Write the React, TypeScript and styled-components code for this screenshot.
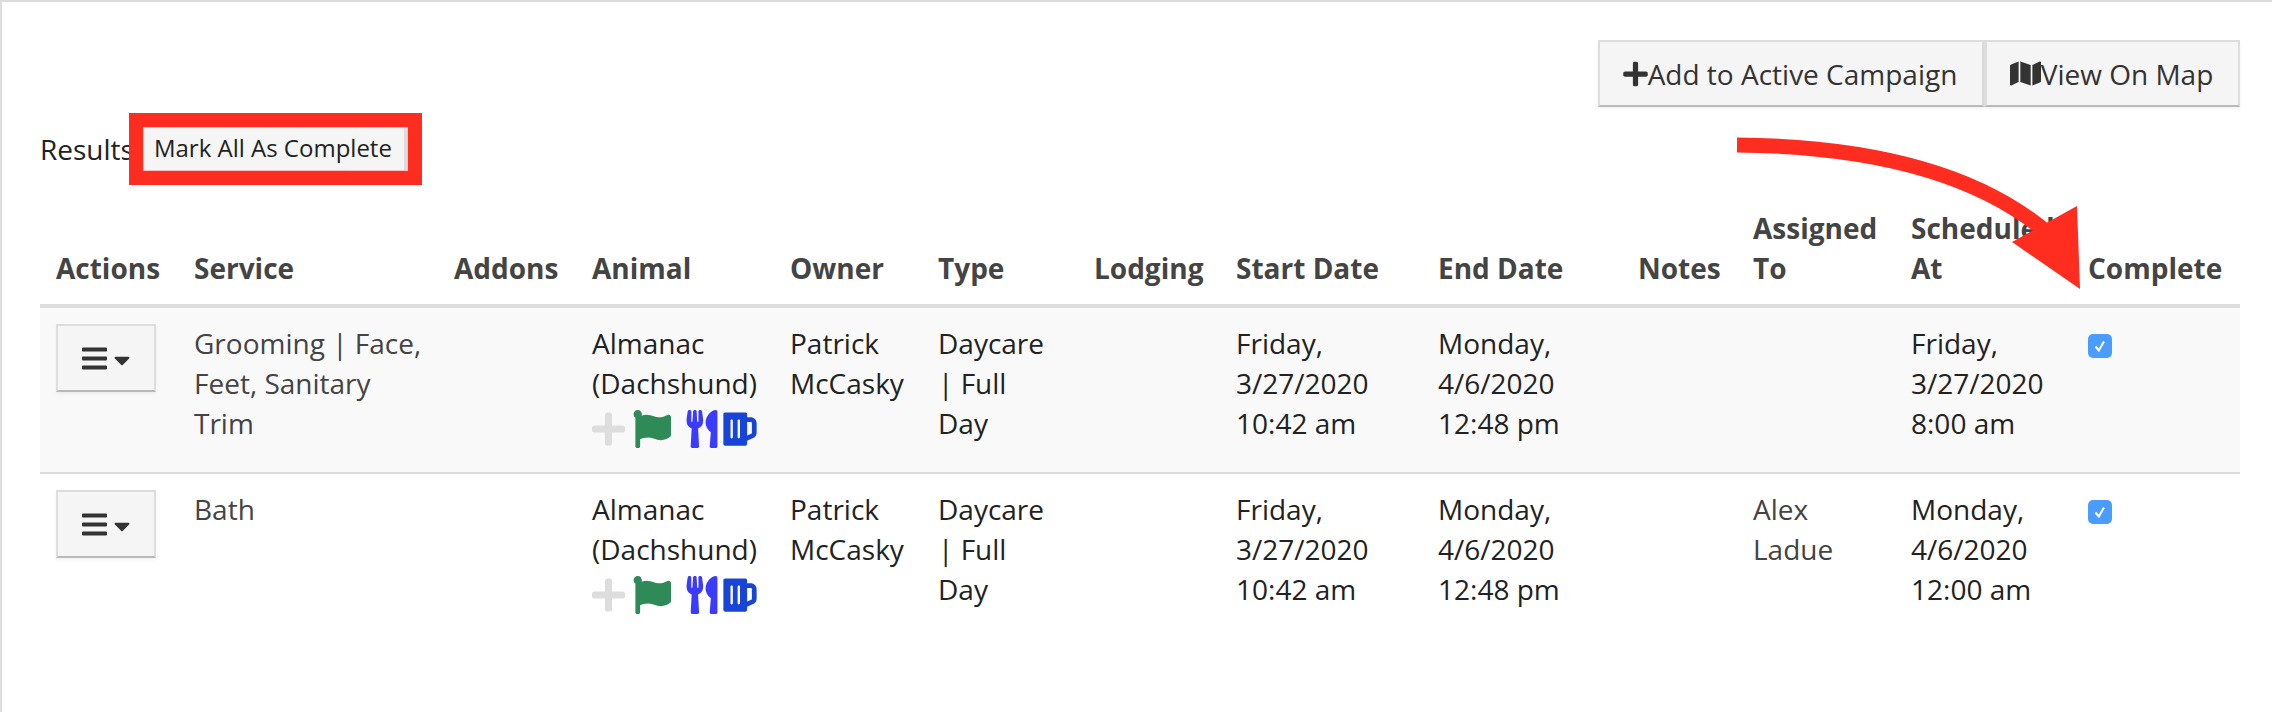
import * as React from "react";
import styled, { createGlobalStyle } from "styled-components";
import { FaBars, FaBeer, FaCaretDown, FaFlag, FaMap, FaPlus, FaUtensils } from "react-icons/fa";

const GlobalStyle = createGlobalStyle`
  html, body {
    margin: 0;
    padding: 0;
    background: #fff;
  }
  body {
    font-family: "Open Sans", "Noto Sans", sans-serif;
    font-size: 28px;
    line-height: 40px;
    color: #222;
  }
`;

type Row = {
  service: string[];
  start: string[];
  end: string[];
  assigned: string[];
  scheduled: string[];
  striped: boolean;
};

const columnWidths = [138, 260, 138, 198, 148, 156, 142, 202, 200, 115, 158, 177, 168];

const rows: Row[] = [
  {
    service: ["Grooming | Face,", "Feet, Sanitary", "Trim"],
    start: ["Friday,", "3/27/2020", "10:42 am"],
    end: ["Monday,", "4/6/2020", "12:48 pm"],
    assigned: [],
    scheduled: ["Friday,", "3/27/2020", "8:00 am"],
    striped: true,
  },
  {
    service: ["Bath"],
    start: ["Friday,", "3/27/2020", "10:42 am"],
    end: ["Monday,", "4/6/2020", "12:48 pm"],
    assigned: ["Alex", "Ladue"],
    scheduled: ["Monday,", "4/6/2020", "12:00 am"],
    striped: false,
  },
];

const Lines = ({ items }: { items: string[] }) => (
  <>
    {items.map((item) => (
      <div key={item}>{item}</div>
    ))}
  </>
);

const App = () => (
  <Page>
    <GlobalStyle />
    <Toolbar>
      <ToolButton $width={386}>
        <ToolPlus />
        Add to Active Campaign
      </ToolButton>
      <ToolButton $width={256}>
        <FaMap size={31} />
        View On Map
      </ToolButton>
    </Toolbar>
    <ResultsRow>
      <span>Results</span>
      <MarkAllButton>Mark All As Complete</MarkAllButton>
    </ResultsRow>
    <Table>
      <colgroup>
        {columnWidths.map((width, index) => (
          <Column key={index} $width={width} />
        ))}
      </colgroup>
      <thead>
        <tr>
          <Th>Actions</Th>
          <Th>Service</Th>
          <Th>Addons</Th>
          <Th>Animal</Th>
          <Th>Owner</Th>
          <Th>Type</Th>
          <Th>Lodging</Th>
          <Th>Start Date</Th>
          <Th>End Date</Th>
          <Th>Notes</Th>
          <Th>Assigned To</Th>
          <Th>Scheduled At</Th>
          <Th>Complete</Th>
        </tr>
      </thead>
      <tbody>
        {rows.map((row) => (
          <Tr key={row.service[0]} $striped={row.striped}>
            <Td>
              <ActionsButton>
                <BarsIcon />
                <CaretIcon />
              </ActionsButton>
            </Td>
            <ServiceTd>
              <Lines items={row.service} />
            </ServiceTd>
            <Td />
            <Td>
              Almanac (Dachshund)
              <IconRow>
                <PlusIcon />
                <FlagIcon />
                <ForkIcon />
                <BeerIcon />
              </IconRow>
            </Td>
            <Td>Patrick McCasky</Td>
            <Td>Daycare | Full Day</Td>
            <Td />
            <Td>
              <Lines items={row.start} />
            </Td>
            <Td>
              <Lines items={row.end} />
            </Td>
            <Td />
            <ServiceTd>
              <Lines items={row.assigned} />
            </ServiceTd>
            <Td>
              <Lines items={row.scheduled} />
            </Td>
            <Td>
              <CheckBox>
                <svg width="16" height="16" viewBox="0 0 16 16" fill="none">
                  <path d="M3.5 8.5 L6.8 12.5 L12 3.5" stroke="#fff" strokeWidth="2" />
                </svg>
              </CheckBox>
            </Td>
          </Tr>
        ))}
      </tbody>
    </Table>
    <Arrow width="360" height="170" viewBox="0 0 360 170">
      <path d="M7 15 C120 16 240 35 320 105" fill="none" stroke="#ff2d1f" strokeWidth="15" />
      <polygon points="347,76 282,112 350,159" fill="#ff2d1f" />
    </Arrow>
  </Page>
);

const Page = styled.div`
  position: relative;
  box-sizing: border-box;
  width: 2272px;
  height: 712px;
  overflow: hidden;
  padding: 38px 32px 0 38px;
  border-top: 2px solid #ddd;
  border-left: 2px solid #ddd;
`;

const Toolbar = styled.div`
  display: flex;
  justify-content: flex-end;
`;

const ToolButton = styled.button<{ $width: number }>`
  display: flex;
  align-items: center;
  justify-content: center;
  box-sizing: border-box;
  width: ${(p) => p.$width}px;
  height: 67px;
  padding: 0 2px 0 0;
  font: inherit;
  color: #333;
  background: #f5f5f5;
  border: 2px solid #ddd;
  border-bottom-color: #b9b9b9;
  box-shadow: 0 2px 3px rgba(0, 0, 0, 0.05);
  & + & {
    border-left-width: 3px;
  }
`;

const ToolPlus = styled(FaPlus)`
  width: 25px;
  height: 28px;
`;

const ResultsRow = styled.div`
  display: flex;
  align-items: center;
  height: 42px;
  margin-top: 21px;
`;

const MarkAllButton = styled.button`
  box-sizing: border-box;
  width: 263px;
  height: 42px;
  margin-left: 10px;
  padding: 0 2px 3px 0;
  font-family: inherit;
  font-size: 24px;
  color: #222;
  background: #f5f5f5;
  border: none;
  border-right: 3px solid #ddd;
  box-shadow: 0 0 0 1px #fbb, 0 0 0 15px #ff2d1f;
`;

const Table = styled.table`
  width: 2200px;
  margin-top: 38px;
  table-layout: fixed;
  border-collapse: collapse;
`;

const Column = styled.col<{ $width: number }>`
  width: ${(p) => p.$width}px;
`;

const Th = styled.th`
  padding: 0 16px 16px;
  vertical-align: bottom;
  text-align: left;
  font-weight: 700;
  color: #444;
  border-bottom: 4px solid #ddd;
`;

const Tr = styled.tr<{ $striped: boolean }>`
  background: ${(p) => (p.$striped ? "#f9f9f9" : "#fff")};
  border-bottom: ${(p) => (p.$striped ? "2px solid #ddd" : "none")};
`;

const Td = styled.td`
  padding: 15px 16px 17px;
  vertical-align: top;
  color: #222;
`;

const ServiceTd = styled(Td)`
  color: #444;
`;

const ActionsButton = styled.button`
  display: flex;
  align-items: center;
  justify-content: center;
  gap: 7px;
  box-sizing: border-box;
  width: 100px;
  height: 68px;
  margin-top: 1px;
  padding: 0;
  color: #333;
  background: #f5f5f5;
  border: 2px solid #ddd;
  border-bottom-color: #b9b9b9;
  box-shadow: 0 2px 3px rgba(0, 0, 0, 0.05);
`;

const BarsIcon = styled(FaBars)`
  width: 25px;
  height: 29px;
`;

const CaretIcon = styled(FaCaretDown)`
  width: 16px;
  height: 26px;
  margin-top: 3px;
`;

const IconRow = styled.div`
  display: flex;
  align-items: center;
  height: 52px;
`;

const PlusIcon = styled(FaPlus)`
  width: 33px;
  height: 38px;
  color: #ddd;
  margin-right: 8px;
`;

const FlagIcon = styled(FaFlag)`
  width: 38px;
  height: 38px;
  color: #2e8b57;
  margin-right: 15px;
`;

const ForkIcon = styled(FaUtensils)`
  width: 32px;
  height: 38px;
  color: #3b3bff;
  margin-right: 5px;
`;

const BeerIcon = styled(FaBeer)`
  width: 34px;
  height: 38px;
  color: #1845d6;
`;

const CheckBox = styled.span`
  display: flex;
  align-items: center;
  justify-content: center;
  width: 24px;
  height: 24px;
  margin-top: 11px;
  background: #4a9dff;
  border-radius: 5px;
`;

const Arrow = styled.svg`
  position: absolute;
  top: 128px;
  left: 1728px;
  pointer-events: none;
`;

export default App;
